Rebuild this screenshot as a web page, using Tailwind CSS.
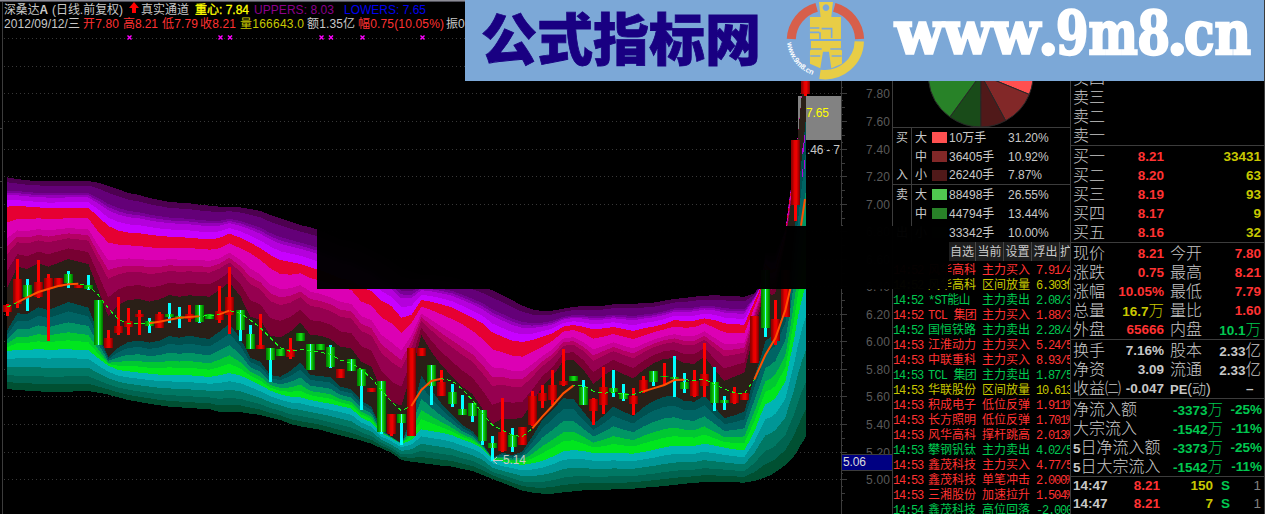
<!DOCTYPE html>
<html lang="zh-CN">

<head>
    <meta charset="UTF-8">
    <meta name="viewport" content="width=device-width, initial-scale=1.0">
    <title>深桑达A 日线</title>
    <script src="https://cdn.jsdelivr.net/npm/@tailwindcss/browser@4"></script>
</head>

<body class="bg-black overflow-hidden font-['Liberation_Sans','Noto_Sans_CJK_SC',sans-serif]">

    <div class="relative flex w-[1265px] h-[514px] bg-black overflow-hidden">

        <!-- K line chart -->
        <svg id="chart" class="w-[892px] h-[514px] shrink-0" viewBox="0 0 892 514" font-size="12">
            <defs>
                <linearGradient id="red">
                    <stop offset="0" stop-color="#8c0000" />
                    <stop offset=".15" stop-color="#a00000" />
                    <stop offset=".4" stop-color="#e60000" />
                    <stop offset=".6" stop-color="#f00000" />
                    <stop offset=".85" stop-color="#aa0000" />
                    <stop offset="1" stop-color="#780000" />
                </linearGradient>
                <linearGradient id="green">
                    <stop offset="0" stop-color="#007800" />
                    <stop offset=".2" stop-color="#00a000" />
                    <stop offset=".45" stop-color="#14dc14" />
                    <stop offset=".6" stop-color="#14dc14" />
                    <stop offset=".85" stop-color="#009600" />
                    <stop offset="1" stop-color="#006e00" />
                </linearGradient>
            </defs>
            <g id="grid" shape-rendering="crispEdges"></g>
            <rect x="798" y="96" width="43" height="44" fill="#828282" />
            <g id="bands" shape-rendering="crispEdges"></g>
            <g id="candles" shape-rendering="crispEdges"></g>
            <g id="lines" fill="none"></g>

            <!-- frame -->
            <g shape-rendering="crispEdges" fill="#3c3c3c">
                <rect x="0" y="0" width="465" height="1" fill="#8c8c96" />
                <rect x="0" y="1" width="465" height="1" fill="#50505a" />
                <rect x="2" y="2" width="1" height="512" />
                <rect x="0" y="128" width="3" height="1" />
                <rect x="0" y="181" width="2" height="1" />
                <rect x="0" y="247" width="2" height="1" />
                <rect x="841" y="81" width="1" height="433" />
                <rect x="842" y="454" width="50" height="17" />
                <rect x="842" y="455" width="50" height="15" fill="#000082" />
            </g>

            <!-- title rows -->
            <g fill="#c8c8c8">
                <text x="4" y="14" textLength="44" lengthAdjust="spacingAndGlyphs">深桑达<tspan font-weight="bold">A</tspan></text>
                <text x="52" y="14" textLength="71" lengthAdjust="spacingAndGlyphs">(日线.前复权)</text>
                <path d="M134 2l5 6h-3v5h-4v-5h-3z" fill="#f00" />
                <text x="141" y="14" textLength="48" lengthAdjust="spacingAndGlyphs">真实通道</text>
                <text x="195" y="14" fill="#ff0" textLength="54" lengthAdjust="spacingAndGlyphs" stroke="#ff0" stroke-width=".3">重心: 7.84</text>
                <text x="254" y="14" fill="#8c008c" textLength="80">UPPERS: 8.03</text>
                <text x="344" y="14" fill="#0000f0" textLength="82">LOWERS: 7.65</text>
                <text x="4" y="28" textLength="76">2012/09/12/三</text>
                <g fill="#ff3232">
                    <text x="83" y="28" textLength="36">开7.80</text>
                    <text x="123" y="28" textLength="35">高8.21</text>
                    <text x="162" y="28" textLength="36">低7.79</text>
                    <text x="200" y="28" textLength="36">收8.21</text>
                    <text x="358" y="28" textLength="86">幅0.75(10.05%)</text>
                </g>
                <text x="240" y="28" fill="#c8c800" textLength="64">量166643.0</text>
                <text x="307" y="28" textLength="48">额1.35亿</text>
                <text x="446" y="28">振0</text>
            </g>

            <!-- value marks -->
            <text x="806" y="117" fill="#ff0" textLength="23">7.65</text>
            <text x="807" y="154" fill="#c8c8c8" textLength="33">.46 - 7</text>
            <text x="843" y="466" fill="#dcdcdc" textLength="23">5.06</text>
            <path d="M503 460.5H493M497 457l-4 3.500 4 3.500" fill="none" stroke="#c8c8c8" />
            <text x="503" y="464" fill="#c8c8c8" textLength="23">5.14</text>
        </svg>

        <!-- Money flow and market alerts -->
        <div class="w-[179px] h-[514px] shrink-0 border-l border-r border-[#3c3c3c] overflow-hidden text-[12px] leading-none text-[#c8c8c8]">
            <div class="h-[128px] border-b border-[#3c3c3c]">
                <svg id="pie" class="w-[177px] h-[127px]" viewBox="893 0 177 127"></svg>
            </div>
            <div id="flow" class="h-[114px]"></div>
            <div class="flex h-[19px] pl-[56px] text-[12px]">
                <div class="w-[27px] shrink-0 bg-[#1e1e1e] border-r border-[#464646] flex items-center justify-center">自选</div>
                <div class="w-[28px] shrink-0 bg-[#1e1e1e] border-r border-[#464646] flex items-center justify-center">当前</div>
                <div class="w-[28px] shrink-0 bg-[#1e1e1e] border-r border-[#464646] flex items-center justify-center">设置</div>
                <div class="w-[28px] shrink-0 bg-[#1e1e1e] border-r border-[#464646] flex items-center justify-center">浮出</div>
                <div class="w-[10px] shrink-0 bg-[#1e1e1e] flex items-center">扩</div>
            </div>
            <div id="alerts" class="pt-[2px] font-['Liberation_Mono','Noto_Sans_CJK_SC',monospace]"></div>
        </div>

        <!-- Quote panel -->
        <div class="w-[194px] h-[514px] shrink-0 border-r border-[#3c3c3c] overflow-hidden leading-none text-[#c8c8c8]">
            <div class="h-[69px]"></div>
            <div id="quotes"></div>
        </div>

        <!-- Blacked out part -->
        <div class="absolute left-[317px] top-[226px] w-[631px] h-[63px] bg-black/98"></div>

        <!-- Site banner -->
        <div class="absolute left-[465px] top-0 w-[799px] h-[81px] bg-[#7ca8d7]">
            <svg class="w-[799px] h-[81px]" viewBox="465 0 799 81">
                <text x="481" y="60" font-size="56" font-weight="900" fill="#190082" stroke="#190082" stroke-width=".8" textLength="280" lengthAdjust="spacingAndGlyphs" font-family="Noto Sans CJK SC, sans-serif">公式指标网</text>
                <g transform="translate(465 0) scale(.3333)">
                    <path d="M979 117A103 103 0 0 1 1055 22" fill="none" stroke="#d75f4b" stroke-width="27" />
                    <path d="M1108 22A103 103 0 0 1 1184 117" fill="none" stroke="#d75f4b" stroke-width="27" />
                    <path d="M1183 124A103 103 0 0 1 1065 223" fill="none" stroke="#e8cd46" stroke-width="28" />
                    <path fill="#e8cd46" fill-rule="evenodd" d="M1062 6h42l-5 45h29v66h-93V51h32zM1083 13a10 10 0 1 0 .1 0z" />
                    <path fill="#e8cd46" d="M1038 123h90v28h-90zM1035 151h96v40l-32 14-7-50h-18l-8 50-31-14z" />
                    <path d="M1035 84h28M1035 97h28M1070 86h30v28M1065 97v20M1036 147h34M1096 147h34M1036 168h30M1100 168h30" fill="none" stroke="#7ca8d7" stroke-width="5" />
                    <path id="ring" d="M966 128A117 117 0 0 0 1056 229" fill="none" />
                    <text font-size="23" font-weight="bold" fill="#fff" font-family="Liberation Sans, sans-serif"><textPath href="#ring" textLength="130" lengthAdjust="spacingAndGlyphs">www.9m8.cn</textPath></text>
                </g>
                <g font-size="59" font-weight="bold" fill="#fff" stroke="#fff" stroke-width="2.500" font-family="DejaVu Serif, serif">
                    <text x="895" y="54" textLength="145" lengthAdjust="spacingAndGlyphs">www</text>
                    <text x="1038" y="54">.</text>
                    <text x="1056" y="54" textLength="114" lengthAdjust="spacingAndGlyphs">9m8</text>
                    <text x="1167" y="54">.</text>
                    <text x="1184" y="54" textLength="67" lengthAdjust="spacingAndGlyphs">cn</text>
                </g>
            </svg>
        </div>
    </div>

    <script>
        const NS = "http://www.w3.org/2000/svg";

        function add(parent, tag, attrs, text) {
            const el = document.createElementNS(NS, tag);
            for (const k in attrs) el.setAttribute(k, attrs[k]);
            if (text) el.textContent = text;
            document.getElementById(parent).appendChild(el);
            return el;
        }

        // every block: origin x, origin y, rows in thirds of a pixel
        function flatten(blocks) {
            const out = [];
            blocks.forEach(([ox, oy, rows]) => rows.forEach(([x, ...ys]) =>
                out.push([ox + x / 3, ...ys.map(y => typeof y === "number" ? oy + y / 3 : y)])));
            return out;
        }

        // x, upper edge, red top, red bottom, core top, core bottom, teal top, lower edge
        const channel = flatten([
            [0, 170, [
                [21, 22, 110, 157, 355, 482, 543, 657], [52, 27, 107, 147, 290, 430, 540, 660],
                [82, 31, 110, 147, 297, 432, 539, 662], [115, 33, 112, 145, 280, 412, 538, 664],
                [145, 33, 115, 147, 290, 420, 539, 666], [205, 33, 114, 145, 267, 396, 538, 665],
                [265, 33, 114, 145, 282, 413, 541, 663], [295, 38, 140, 185, 360, 490, 565, 668],
                [325, 48, 168, 218, 440, 562, 587, 674], [355, 58, 182, 224, 405, 533, 600, 682],
                [385, 69, 188, 226, 390, 516, 604, 690], [418, 75, 190, 228, 387, 512, 608, 696],
                [448, 84, 194, 232, 395, 518, 611, 701], [478, 90, 198, 234, 388, 512, 614, 706],
                [508, 96, 200, 233, 375, 498, 614, 710], [538, 98, 202, 234, 380, 503, 615, 712],
                [568, 100, 203, 235, 376, 497, 616, 714], [598, 104, 206, 236, 378, 503, 618, 716],
                [628, 107, 208, 239, 380, 507, 621, 717]]],
            [200, 190, [
                [58, 50, 144, 175, 300, 425, 556, 666], [88, 50, 131, 160, 277, 402, 549, 666],
                [121, 52, 143, 175, 318, 445, 557, 666], [151, 57, 158, 190, 380, 503, 570, 671],
                [181, 63, 175, 210, 390, 515, 585, 675], [211, 75, 195, 235, 437, 555, 602, 683],
                [241, 85, 210, 252, 442, 560, 613, 690], [271, 95, 216, 254, 425, 543, 620, 702],
                [301, 105, 222, 250, 397, 517, 622, 709], [331, 112, 232, 264, 435, 555, 630, 714],
                [361, 122, 241, 272, 437, 558, 636, 719], [391, 135, 252, 282, 447, 562, 641, 728],
                [421, 148, 265, 293, 470, 590, 648, 736], [454, 155, 272, 300, 475, 598, 656, 744],
                [484, 165, 292, 335, 515, 632, 683, 752], [514, 180, 303, 346, 530, 650, 697, 761]]],
            [380, 270, [
                [4, -45, 92, 142, 360, 478, 490, 535], [34, -25, 108, 160, 395, 500, 505, 548],
                [64, -5, 143, 190, 407, 520, 522, 570], [94, 5, 135, 160, 310, 440, 510, 575],
                [124, 15, 90, 110, 195, 317, 478, 579], [154, 15, 95, 120, 245, 360, 483, 583],
                [184, 18, 103, 133, 285, 400, 488, 587], [217, 22, 113, 148, 320, 435, 496, 590],
                [247, 30, 128, 163, 350, 465, 509, 597], [277, 40, 143, 182, 372, 483, 519, 603],
                [307, 50, 160, 207, 415, 520, 535, 615], [337, 61, 187, 238, 463, 563, 567, 627],
                [367, 76, 200, 247, 445, 548, 575, 638], [397, 91, 212, 257, 448, 555, 580, 650],
                [427, 107, 216, 260, 443, 545, 585, 662], [457, 118, 210, 246, 398, 500, 580, 668],
                [487, 123, 200, 230, 350, 450, 573, 671], [517, 122, 190, 213, 320, 420, 560, 671],
                [550, 116, 170, 185, 272, 385, 544, 667], [580, 111, 165, 180, 270, 387, 540, 664],
                [610, 108, 170, 190, 298, 425, 543, 661]]],
            [580, 270, [
                [40, 107, 178, 206, 342, 462, 549, 660], [70, 107, 175, 200, 317, 438, 550, 660],
                [100, 103, 171, 192, 297, 410, 548, 658], [130, 102, 177, 200, 312, 425, 550, 657],
                [160, 101, 183, 207, 325, 438, 551, 656], [190, 100, 175, 197, 300, 412, 546, 653],
                [220, 98, 170, 187, 280, 393, 540, 651], [253, 92, 162, 178, 266, 380, 532, 648],
                [283, 87, 150, 170, 265, 377, 527, 645], [313, 84, 153, 173, 280, 393, 527, 641],
                [343, 80, 152, 172, 281, 395, 528, 639], [373, 77, 145, 160, 260, 377, 521, 636],
                [403, 76, 150, 173, 298, 410, 527, 636], [433, 77, 160, 187, 333, 445, 533, 636],
                [463, 79, 163, 190, 320, 436, 538, 637], [493, 80, 164, 190, 308, 425, 541, 638],
                [523, 70, 95, 112, 180, 320, 485, 633], [540, 45, 58, 68, 120, 270, 440, 628],
                [556, -50, -20, -12, 20, 213, 402, 622], [573, -50, 0, 10, 77, 200, 395, 615],
                [586, -50, -5, 5, 70, 188, 385, 607], [616, -120, -115, -110, -85, 115, 335, 585],
                [630, -230, -220, -210, -175, 20, 265, 572], [640, -290, -289, -288, -285, -80, 220, 562],
                [654, -408, -408, -408, -405, -220, 140, 540], [665, -522, -522, -522, -520, -330, 90, 520],
                [669, -572, -572, -572, -570, -370, 75, 514], [678, -640, -640, -640, -638, -460, 45, 500]]]
        ]);

        // colour, curve a, curve b, from and to as fractions between them
        const bandList = [
            ["#4d0050", 1, 2, 0, .17], ["#640078", 1, 2, .17, .45], ["#780096", 1, 2, .45, .53],
            ["#9600b9", 1, 2, .53, .61], ["#b400dc", 1, 2, .61, .79], ["#c800ff", 1, 2, .79, 1],
            ["#e60032", 2, 3, 0, 1],
            ["#dc00b4", 3, 4, 0, .24], ["#c80096", 3, 4, .24, .37], ["#b40064", 3, 4, .37, .49],
            ["#960050", 3, 4, .49, .74], ["#780032", 3, 4, .74, 1],
            ["#2a1f17", 4, 5, 0, 1],
            ["#005050", 5, 6, 0, .2], ["#006464", 5, 6, .2, .43], ["#009664", 5, 6, .43, .64],
            ["#00c832", 5, 6, .64, .81], ["#00e61e", 5, 6, .81, 1],
            ["#00b4b4", 6, 7, 0, .21], ["#009696", 6, 7, .21, .43], ["#007864", 6, 7, .43, .64],
            ["#006450", 6, 7, .64, .82], ["#005032", 6, 7, .82, 1]
        ];

        bandList.forEach(([fill, a, b, from, to]) => {
            const top = channel.map(r => [r[0], r[a] + (r[b] - r[a]) * from]);
            const bottom = channel.map(r => [r[0], r[a] + (r[b] - r[a]) * to]).reverse();
            add("bands", "polygon", { fill, points: top.concat(bottom).map(p => p.join()).join(" ") });
        });
        add("bands", "path", { d: "M804.500 135v8M803.500 143v9M802.500 148v6M804.500 160v9M802.500 169v8", stroke: "#b400dc" });

        // x, body top, body bottom, wick top, wick bottom, type
        const candles = flatten([
            [0, 170, [
                [22, 405, 425, 402, 437, "R"], [52, 327, 403, 267, 413, "R"], [82, 345, 381, 327, 422, "G"],
                [115, 336, 380, 270, 383, "R"], [145, 323, 358, 312, 513, "R"], [175, 324, 350, 324, 350, "R"],
                [205, 312, 340, 303, 353, "G"], [235, 345, 353, 345, 353, "R"], [265, 345, 358, 315, 360, "G"],
                [295, 390, 524, 390, 524, "G"], [325, 503, 533, 480, 533, "R"], [355, 468, 490, 381, 495, "R"],
                [385, 453, 471, 414, 495, "R"], [418, 431, 441, 420, 495, "R"], [448, 453, 467, 444, 489, "G"],
                [478, 432, 473, 426, 473, "R"], [508, 432, 441, 399, 459, "G"], [538, 438, 447, 411, 474, "G"],
                [568, 433, 446, 405, 456, "R"], [598, 405, 456, 405, 459, "G"], [628, 432, 448, 432, 448, "g"]]],
            [200, 190, [
                [58, 363, 389, 288, 399, "R"], [88, 321, 375, 231, 432, "R"], [121, 360, 420, 360, 453, "G"],
                [151, 432, 476, 405, 476, "G"], [181, 465, 476, 372, 476, "R"], [211, 474, 510, 474, 576, "G"],
                [241, 477, 497, 477, 497, "g"], [271, 477, 501, 444, 507, "R"], [301, 429, 453, 429, 453, "g"],
                [331, 462, 540, 462, 540, "G"], [361, 462, 480, 462, 480, "g"], [391, 471, 531, 465, 534, "G"],
                [421, 537, 563, 537, 563, "R"], [454, 507, 543, 507, 543, "G"], [484, 537, 588, 537, 660, "G"],
                [514, 594, 605, 594, 605, "R"], [544, 573, 726, 573, 732, "G"], [574, 672, 732, 672, 738, "R"],
                [604, 672, 699, 672, 765, "G"], [634, 474, 738, 474, 738, "R"]]],
            [380, 270, [
                [124, 234, 258, 234, 258, "R"], [154, 285, 348, 285, 405, "G"], [184, 335, 377, 300, 377, "R"],
                [217, 366, 402, 342, 411, "G"], [247, 417, 435, 375, 435, "G"], [277, 399, 438, 399, 456, "G"],
                [307, 420, 513, 420, 525, "G"], [337, 519, 534, 498, 573, "G"], [367, 486, 543, 384, 546, "R"],
                [397, 495, 531, 474, 546, "G"], [427, 471, 525, 471, 525, "R"], [457, 378, 465, 363, 468, "R"],
                [487, 369, 393, 345, 414, "R"], [517, 345, 390, 300, 405, "R"], [550, 333, 346, 237, 348, "R"],
                [580, 318, 333, 318, 333, "g"], [610, 350, 405, 330, 405, "G"], [640, 387, 423, 384, 465, "R"]]],
            [580, 270, [
                [70, 351, 405, 291, 432, "R"], [100, 354, 366, 300, 381, "G"], [130, 369, 387, 342, 393, "G"],
                [160, 377, 402, 354, 435, "R"], [190, 330, 366, 318, 369, "R"], [220, 303, 336, 303, 348, "G"],
                [253, 318, 321, 279, 346, "D"], [283, 321, 327, 258, 381, "G"], [313, 336, 357, 309, 369, "G"],
                [343, 333, 378, 300, 381, "R"], [373, 312, 348, 219, 381, "R"], [403, 336, 399, 291, 423, "G"],
                [433, 390, 399, 378, 420, "G"], [463, 369, 399, 351, 402, "R"], [493, 370, 390, 370, 390, "R"],
                [523, 138, 279, 138, 279, "R"], [556, 0, 174, 0, 201, "G"], [586, 147, 213, 90, 225, "R"],
                [616, 0, 140, 0, 140, "R"]]],
            [730, 80, [[196, 180, 375, 180, 423, "R"], [226, 0, 42, 0, 48, "R"]]]
        ]);

        candles.forEach(([x, top, bottom, high, low, type]) => {
            const up = type === "R" || type === "D";
            const left = Math.round(x - 4.5);
            add("candles", "rect", { x: left + 3, y: high, width: 3, height: low - high, fill: up ? "#f00" : type === "g" ? "none" : "#00ffff" });
            add("candles", "rect", { x: left, y: top, width: 9, height: bottom - top, fill: type === "R" ? "url(#red)" : "url(#green)" });
            if (type === "G") add("candles", "rect", { x: left + 4, y: top, width: 1, height: bottom - top, fill: "#5affff" });
        });

        const middle = flatten([
            [0, 170, [[22, 411], [52, 397], [80, 383], [115, 366], [145, 357], [175, 348], [205, 343], [235, 341], [265, 347], [295, 375],
                [325, 415], [355, 448], [370, 455], [385, 460], [448, 460], [478, 455], [508, 449], [538, 443], [568, 441], [598, 439], [628, 437]]],
            [200, 190, [[58, 373], [88, 362], [121, 370], [151, 390], [181, 413], [211, 443], [241, 473], [271, 484], [301, 478], [331, 483],
                [361, 487], [391, 493], [421, 510], [454, 520], [484, 538], [514, 565], [544, 600], [574, 635], [604, 662], [634, 648]]],
            [380, 270, [[124, 360], [154, 333], [184, 326], [217, 333], [247, 358], [277, 390], [307, 430], [337, 465], [367, 480],
                [397, 495], [427, 500], [457, 475], [487, 440], [517, 408], [550, 370], [580, 347], [610, 347]]],
            [580, 270, [[40, 363], [70, 370], [100, 366], [130, 373], [160, 374], [190, 364], [253, 345], [283, 330], [313, 329], [343, 332],
                [373, 328], [403, 342], [433, 357], [463, 368], [493, 371], [523, 328]]]
        ]);
        add("lines", "polyline", { points: middle.map(p => p.join()).join(" "), stroke: "#14ff14", "stroke-dasharray": "4 3", "shape-rendering": "crispEdges" });

        // rising parts of the middle line
        [
            [[0, 170, [[52, 397], [80, 383], [115, 366], [145, 357], [175, 348], [205, 343], [235, 341]]]],
            [[0, 170, [[448, 460], [478, 455], [508, 449], [538, 443], [568, 441], [598, 439]]]],
            [[200, 190, [[58, 373], [88, 362]]]],
            [[380, 270, [[94, 408], [124, 360], [154, 333], [184, 326]]]],
            [[380, 270, [[457, 475], [487, 440], [517, 408], [550, 370], [580, 347]]]],
            [[580, 270, [[190, 364], [220, 355], [253, 345], [283, 330], [313, 329]]]],
            [[580, 270, [[523, 328], [556, 255], [586, 205], [616, 120], [632, 52]]]],
            [[730, 80, [[213, 437], [225, 357]]]]
        ].forEach(part => add("lines", "polyline", { points: flatten(part).map(p => p.join()).join(" "), stroke: "#ff5000", "stroke-width": 2 }));

        // price axis, 0.20 a step
        for (let i = -2; i < 15; i++) {
            const y = Math.round(93.4 + i * 27.55);
            const price = (7.8 - i * 0.2).toFixed(2);
            add("grid", "path", { d: `M4 ${y + .5}H841`, stroke: "#373737", "stroke-dasharray": "1 3" });
            add("grid", "path", { d: `M842 ${y + .5}h5M842 ${y + 7.5}h1M842 ${y + 14.5}h3M842 ${y + 21.5}h1`, stroke: "#3c3c3c" });
            add("grid", "text", { x: 866, y: y + 5, fill: "#5a5a5a", textLength: 24 }, price);
        }
        add("grid", "path", { d: "M4 38.500H465", stroke: "#373737", "stroke-dasharray": "1 3" });
        [129.5, 220.5, 230, 321.5, 331, 362.5, 422.5].forEach(x =>
            add("lines", "path", { d: `M${x - 2} 35.500l4 4m0-4l-4 4`, stroke: "#ff00ff", "stroke-width": 1.4 }));

        // pie
        let angle = 0;
        [[31.2, "#ff5050"], [10.92, "#822828"], [7.87, "#501919"], [10, "#194b19"], [13.44, "#288228"], [26.55, "#50c850"]].forEach(([part, fill]) => {
            const point = a => `${980.7 + 52.5 * Math.sin(a)} ${74.5 - 52.5 * Math.cos(a)}`;
            const next = angle + part / 100 * 2 * Math.PI;
            add("pie", "path", { d: `M980.700 74.500L${point(angle)}A52.500 52.500 0 0 1 ${point(next)}Z`, fill, stroke: "#282828" });
            angle = next;
        });

        const flow = [
            ["买", "大", "#ff5050", "10万手", "31.20%"], ["", "中", "#822828", "36405手", "10.92%"], ["入", "小", "#501919", "26240手", "7.87%"],
            ["卖", "大", "#50c850", "88498手", "26.55%"], ["", "中", "#288228", "44794手", "13.44%"], ["出", "小", "#194b19", "33342手", "10.00%"]
        ];
        document.getElementById("flow").innerHTML = flow.map((r, i) => `
            <div class="flex h-[19px] items-center ${i === 2 ? "border-b border-[#3c3c3c]" : ""}">
                <span class="w-[19px] h-[19px] pl-[3px] flex items-center border-r border-[#3c3c3c]">${r[0]}</span>
                <span class="w-[20px] pl-[3px]">${r[1]}</span>
                <span class="w-[15px] h-[11px]" style="background:${r[2]}"></span>
                <span class="w-[61px] pl-[2px] whitespace-nowrap">${r[3]}</span>
                <span>${r[4]}</span>
            </div>`).join("");

        const color = { r: "text-[#ff3232]", g: "text-[#00c850]", y: "text-[#c8c800]", w: "text-[#c8c8c8]", d: "text-[#828282]" };

        const alerts = [
            ["14:52", "风华高科", "主力买入", "7.91/4", "r"], ["14:52", "风华高科", "区间放量", "6.303倍", "y"],
            ["14:52", "*ST能山", "主力卖出", "2.08/3", "g"], ["14:52", "TCL 集团", "主力买入", "1.88/3", "r"],
            ["14:52", "国恒铁路", "主力卖出", "2.28/4", "g"], ["14:53", "江淮动力", "主力买入", "5.24/5", "r"],
            ["14:53", "中联重科", "主力买入", "8.93/5", "r"], ["14:53", "TCL 集团", "主力卖出", "1.87/5", "g"],
            ["14:53", "华联股份", "区间放量", "10.613", "y"], ["14:53", "积成电子", "低位反弹", "1.911%", "r"],
            ["14:53", "长方照明", "低位反弹", "1.701%", "r"], ["14:53", "风华高科", "撑杆跳高", "2.013%", "r"],
            ["14:53", "攀钢钒钛", "主力卖出", "4.02/5", "g"], ["14:53", "鑫茂科技", "主力买入", "4.77/5", "r"],
            ["14:53", "鑫茂科技", "单笔冲击", "2.000%", "r"], ["14:53", "三湘股份", "加速拉升", "1.504%", "r"],
            ["14:54", "鑫茂科技", "高位回落", "-2.000", "g"]
        ];
        document.getElementById("alerts").innerHTML = alerts.map(r => `
            <div class="flex h-[15px] items-center whitespace-nowrap ${color[r[4]]}">
                <span class="w-[35px] shrink-0 tracking-[-1.2px]">${r[0]}</span>
                <span class="w-[54px] shrink-0 ${/[A-Z]/.test(r[1]) ? "tracking-[-0.8px]" : ""}">${r[1]}</span>
                <span class="w-[54px] shrink-0">${r[2]}</span>
                <span class="shrink-0 tracking-[-1.2px]">${r[3]}</span>
            </div>`).join("");

        // label, value, colour, second label, second value, colour
        const quotes = [
            ["卖四"], ["卖三"], ["卖二"], ["卖一"], null,
            ["买一", "8.21", "r", "", "33431", "y"], ["买二", "8.20", "r", "", "63", "y"], ["买三", "8.19", "r", "", "93", "y"],
            ["买四", "8.17", "r", "", "9", "y"], ["买五", "8.16", "r", "", "32", "y"], null,
            ["现价", "8.21", "r", "今开", "7.80", "r"], ["涨跌", "0.75", "r", "最高", "8.21", "r"], ["涨幅", "10.05%", "r", "最低", "7.79", "r"],
            ["总量", "16.7万", "y", "量比", "1.60", "r"], ["外盘", "65666", "r", "内盘", "10.1万", "g"], null,
            ["换手", "7.16%", "w", "股本", "2.33亿", "w"], ["净资", "3.09", "w", "流通", "2.33亿", "w"], ["收益㈡", "-0.047", "w", "PE(动)", "–&nbsp;&nbsp;", "w"], null
        ];
        const cjk = s => s.replace(/[万亿]/g, '<span class="font-light text-[15.500px] leading-none">$&</span>');
        const pair = (label, value, c) => `
            <div class="flex items-center justify-between w-[91px]">
                <span class="text-[16px] font-light">${label.replace("PE", '<b class="text-[13px] font-bold">PE</b>').replace("(动)", '<span class="text-[14px]">(动)</span>')}</span>
                <b class="text-[13.500px] ${color[c] || ""}">${cjk(value || "")}</b>
            </div>`;
        let html = quotes.map(r => r === null
            ? `<div class="h-[1px] mb-[1px] bg-[#3c3c3c]"></div>`
            : `<div class="flex h-[19px] pl-[2px] gap-[6px] whitespace-nowrap">${pair(r[0], r[1], r[2])}${pair(r[3] || "", r[4], r[5])}</div>`).join("");
        html += [["净流入额", "-3373万", "-25%"], ["大宗流入", "-1542万", "-11%"], ["5日净流入额", "-3373万", "-25%"], ["5日大宗流入", "-1542万", "-11%"]].map(r => `
            <div class="flex h-[19px] items-center pl-[2px] pr-[2px] whitespace-nowrap">
                <span class="w-[90px] text-[16px] font-light">${r[0].replace("5", '<b class="text-[13.500px] font-bold">5</b>')}</span>
                <b class="w-[60px] text-right text-[13.500px] ${color.g}">${cjk(r[1])}</b>
                <b class="flex-1 text-right text-[13.500px] ${color.g}">${r[2]}</b>
            </div>`).join("");
        html += `<div class="h-[1px] bg-[#3c3c3c]"></div>`;
        html += [["14:47", "8.21", "150", "S", "1"], ["14:47", "8.21", "7", "S", "1"]].map(r => `
            <div class="flex h-[18px] items-center pl-[2px] text-[13.500px] font-bold">
                <span class="w-[36px]">${r[0]}</span>
                <span class="w-[51px] text-right ${color.r}">${r[1]}</span>
                <span class="w-[53px] text-right ${color.y}">${r[2]}</span>
                <span class="w-[17px] text-right ${color.g}">${r[3]}</span>
                <span class="w-[31px] text-right font-normal ${color.d}">${r[4]}</span>
            </div>`).join("");
        document.getElementById("quotes").innerHTML = html;
    </script>

</body>

</html>
